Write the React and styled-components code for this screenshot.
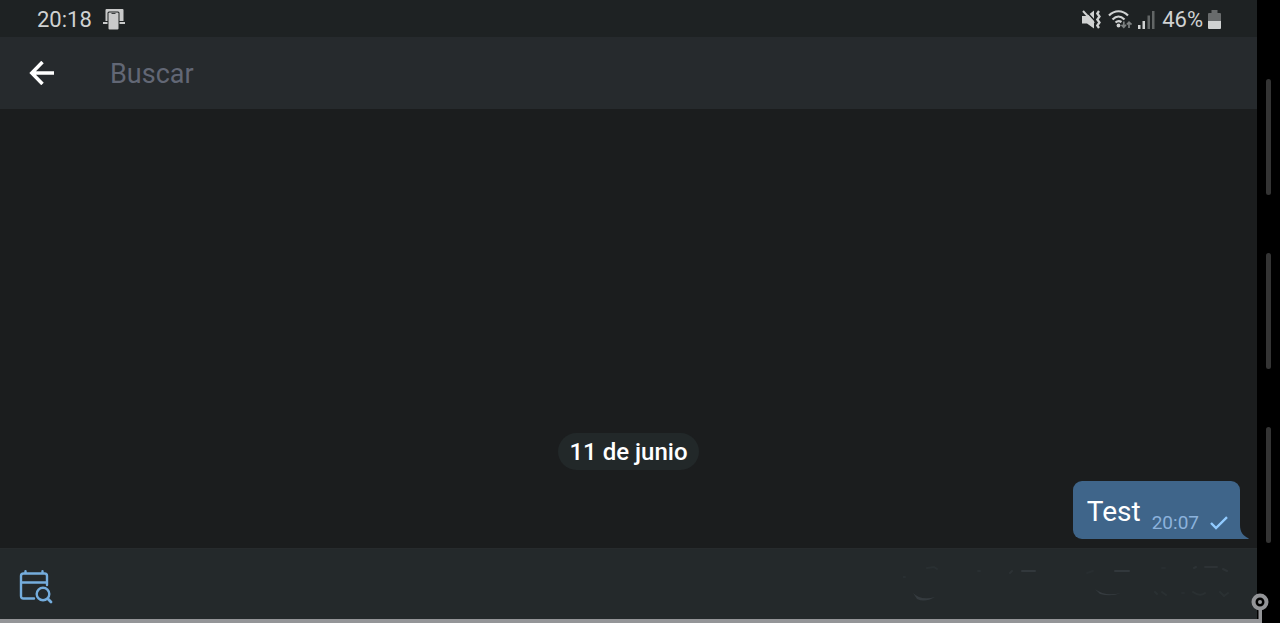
import React from "react";
import styled, { createGlobalStyle } from "styled-components";

const GlobalStyle = createGlobalStyle`
  * { box-sizing: border-box; }
  body { margin: 0; background: #000; font-family: Roboto, "Noto Sans", sans-serif; }
  svg { display: block; flex: none; }
`;

const Device = styled.div`
  position: relative;
  display: flex;
  flex-direction: column;
  min-height: 100vh;
  background: #000;
`;

const Display = styled.div`
  flex: 1;
  display: flex;
`;

const Screen = styled.div`
  flex: 1;
  min-width: 0;
  display: flex;
  flex-direction: column;
  background: #1b1d1e;
`;

const EdgePanel = styled.aside`
  width: 23px;
  padding: 79px 0 0 9px;
  display: flex;
  flex-direction: column;
  gap: 58px;
`;

const EdgeHandle = styled.div`
  width: 5px;
  height: 116px;
  border-radius: 3px;
  background: #343434;
`;

const StatusBar = styled.header`
  height: 37px;
  padding: 2px 36px 0 37px;
  display: flex;
  align-items: center;
  justify-content: space-between;
  background: #1e2223;
  color: #d0d2d2;
  font-size: 22px;
  line-height: 28px;
`;

const StatusGroup = styled.div`
  display: flex;
  align-items: center;
  gap: ${(p) => p.$gap}px;
`;

const SearchBar = styled.div`
  height: 72px;
  padding: 0 24px;
  display: flex;
  align-items: center;
  gap: 50px;
  background: #262a2d;
`;

const IconButton = styled.button`
  width: 36px;
  height: 40px;
  padding: 0;
  border: 0;
  display: flex;
  align-items: center;
  justify-content: center;
  background: transparent;
  color: ${(p) => p.$color};
`;

const SearchInput = styled.input`
  flex: 1;
  min-width: 0;
  height: 40px;
  padding: 2px 0 0;
  border: 0;
  outline: 0;
  background: transparent;
  color: #fff;
  font: 400 27px/38px Roboto, "Noto Sans", sans-serif;
  &::placeholder { color: #626775; opacity: 1; }
`;

const Chat = styled.main`
  flex: 1;
  padding: 0 8px 9px 0;
  display: flex;
  flex-direction: column;
  justify-content: flex-end;
  gap: 11px;
`;

const DateBadge = styled.time`
  align-self: center;
  margin-left: 8px;
  padding: 1px 11px 0;
  border-radius: 19px;
  background: #222829;
  color: #fff;
  font-weight: 500;
  font-size: 24px;
  line-height: 36px;
`;

const MessageRow = styled.div`
  display: flex;
  align-items: flex-end;
  justify-content: flex-end;
`;

const Bubble = styled.article`
  height: 58px;
  padding: 0 12px 0 14px;
  display: flex;
  align-items: flex-end;
  gap: 11px;
  border-radius: 9px 9px 0 9px;
  background: #3f658a;
`;

const MessageText = styled.p`
  margin: 0 0 8px;
  color: #fff;
  font-size: 28px;
  line-height: 38px;
`;

const MessageMeta = styled.div`
  display: flex;
  align-items: center;
  gap: 11px;
  margin-bottom: 3px;
  color: #8cb2dc;
  font-size: 19px;
  line-height: 26px;
`;

const BottomBar = styled.footer`
  height: 71px;
  padding: 6px 24px 0 18px;
  display: flex;
  align-items: center;
  justify-content: space-between;
  background: #24292b;
  border-top: 1px solid #272b2d;
`;

const BaseLine = styled.div`
  height: 4px;
  margin-right: 19px;
  background: #949598;
`;

const PenMarker = styled.div`
  position: absolute;
  right: 11px;
  bottom: 0;
`;

function RotationIcon() {
  return (
    <svg width="22" height="21" viewBox="0 0 22 21" aria-hidden="true">
      <path d="M2.500 1Q2.500 0 3.500 0H19.500Q20.500 0 20.500 1V12H2.500Z" fill="#c9caca" />
      <path d="M0 13H22V15H0Z" fill="#c9caca" />
      <rect x="4.500" y="2.500" width="12" height="18.500" rx="1.500" fill="#1e2223" />
      <rect x="5.500" y="3.500" width="10" height="17" rx="1" fill="#c9caca" />
      <path d="M8.500 4H12.500V5H8.500Z" fill="#3b3f40" />
    </svg>
  );
}

function MutedVibrateIcon() {
  return (
    <svg width="20" height="19" viewBox="0 0 20 19" fill="none" aria-hidden="true">
      <path d="M0 6H5L12 0.500V18.500L5 13.500H0Z" fill="#d0d2d2" />
      <path d="M3 0L13 11" stroke="#1e2223" strokeWidth="1.500" />
      <path d="M1 1L12 13" stroke="#d0d2d2" strokeWidth="2" />
      <path d="M17 1L15.300 3.500L17.500 6.500L15.300 9.500L17.500 12.500L15.300 15.500L17 18" stroke="#d0d2d2" strokeWidth="2.300" />
    </svg>
  );
}

function WifiIcon() {
  return (
    <svg width="24" height="20" viewBox="0 0 24 20" fill="none" aria-hidden="true">
      <path d="M1 5.500C6.500 -0.200 14.500 -0.200 20 5.500M4.500 9.500C8.500 5.500 12.500 5.500 16.500 9.500M7.500 12.500C9.500 10.700 11.500 10.700 13.500 12" stroke="#d0d2d2" strokeWidth="2.200" />
      <circle cx="10.500" cy="15.500" r="1.900" fill="#d0d2d2" />
      <path d="M15.800 11.500V17M13.500 14.800L15.800 17.300L18 14.800M21 18V12M18.800 14.500L21 12.200L23.500 14.500" stroke="#7d8181" strokeWidth="1.700" />
    </svg>
  );
}

function SignalIcon() {
  return (
    <svg width="18" height="19" viewBox="0 0 18 19" aria-hidden="true">
      <path d="M0 15H2.500V19H0ZM4.500 11H7V19H4.500Z" fill="#d0d2d2" />
      <path d="M9.500 5.500H12V19H9.500ZM14 1H16.500V19H14Z" fill="#626666" />
    </svg>
  );
}

function BatteryIcon() {
  return (
    <svg width="13" height="19" viewBox="0 0 13 19" aria-hidden="true">
      <path d="M3.500 0H9.500V3H12Q13 3 13 4V11H0V4Q0 3 1 3H3.500Z" fill="#686b6c" />
      <path d="M0 11H13V18Q13 19 12 19H1Q0 19 0 18Z" fill="#d0d2d2" />
    </svg>
  );
}

function BackIcon() {
  return (
    <svg width="26" height="24" viewBox="0 0 26 24" fill="none" stroke="currentColor" strokeWidth="3.500" aria-hidden="true">
      <path d="M13.500 1L2.800 12L13.500 23M3 12H25" />
    </svg>
  );
}

function SentIcon() {
  return (
    <svg width="18" height="14" viewBox="0 0 18 14" fill="none" stroke="#92cbff" strokeWidth="2.400" aria-label="Enviado">
      <path d="M1 7L6 12L17 1.200" />
    </svg>
  );
}

function BubbleTail() {
  return (
    <svg width="9" height="14" viewBox="0 0 9 14" fill="#3f658a" aria-hidden="true">
      <path d="M0 0C0 7 3 11 9 13.500L8 14H0Z" />
    </svg>
  );
}

function CalendarSearchIcon() {
  return (
    <svg width="34" height="34" viewBox="0 0 34 34" fill="none" stroke="currentColor" strokeWidth="2.400" strokeLinecap="round" aria-hidden="true">
      <path d="M15 28.500H4.500Q2 28.500 2 26V6Q2 3.500 4.500 3.500H25.500Q28 3.500 28 6V15M2 12.500H28M6.500 1.300V3.500M23.500 1.300V3.500" />
      <circle cx="24" cy="24" r="6.300" />
      <path d="M28.800 28.800L32 32" strokeWidth="2.800" />
    </svg>
  );
}

function FaintMarks() {
  return (
    <svg width="330" height="44" viewBox="0 0 330 44" fill="none" stroke="#353b3f" strokeWidth="2" strokeLinecap="round" aria-hidden="true">
      <path d="M10 28Q18 36 32 32Q22 38 14 34Z" fill="#353b3f" stroke="none" />
      <path d="M192 24Q202 32 218 28Q208 32 197 29Z" fill="#353b3f" stroke="none" />
      <path d="M24 3L31 2L34 4M0 12H2M75 6H77" opacity="0.350" />
      <path d="M119 6H132M212 6H226" opacity="0.850" />
      <path d="M107 8L109 6M291 3L293 2M302 2H314M320 4L324 6" opacity="0.500" />
      <path d="M252 27L254 29M259 27L263 30M290 27Q297 32 302 28M317 27L321 31L325 28" opacity="0.400" />
      <path d="M184 8L190 6M259 3H262M279 28H281" opacity="0.250" />
    </svg>
  );
}

export default function App() {
  return (
    <Device>
      <GlobalStyle />
      <Display>
        <Screen>
          <StatusBar>
            <StatusGroup $gap={11}>
              <time>20:18</time>
              <RotationIcon />
            </StatusGroup>
            <StatusGroup $gap={5}>
              <StatusGroup $gap={6}>
                <MutedVibrateIcon />
                <WifiIcon />
                <SignalIcon />
                <span>46%</span>
              </StatusGroup>
              <BatteryIcon />
            </StatusGroup>
          </StatusBar>
          <SearchBar role="search">
            <IconButton type="button" aria-label="Atrás" $color="#fff">
              <BackIcon />
            </IconButton>
            <SearchInput type="text" aria-label="Buscar" placeholder="Buscar" />
          </SearchBar>
          <Chat>
            <DateBadge>11 de junio</DateBadge>
            <MessageRow>
              <Bubble>
                <MessageText>Test</MessageText>
                <MessageMeta>
                  <time>20:07</time>
                  <SentIcon />
                </MessageMeta>
              </Bubble>
              <BubbleTail />
            </MessageRow>
          </Chat>
          <BottomBar>
            <IconButton type="button" aria-label="Buscar por fecha" $color="#75addd">
              <CalendarSearchIcon />
            </IconButton>
            <FaintMarks />
          </BottomBar>
        </Screen>
        <EdgePanel>
          <EdgeHandle />
          <EdgeHandle />
          <EdgeHandle />
        </EdgePanel>
      </Display>
      <BaseLine />
      <PenMarker>
        <svg width="18" height="30" viewBox="0 0 18 30" aria-hidden="true">
          <path d="M7.500 15H11V30H7.500Z" fill="#949598" />
          <circle cx="9" cy="9" r="6.500" fill="#000" stroke="#949598" strokeWidth="4" />
          <circle cx="9" cy="9" r="2" fill="#949598" />
        </svg>
      </PenMarker>
    </Device>
  );
}
